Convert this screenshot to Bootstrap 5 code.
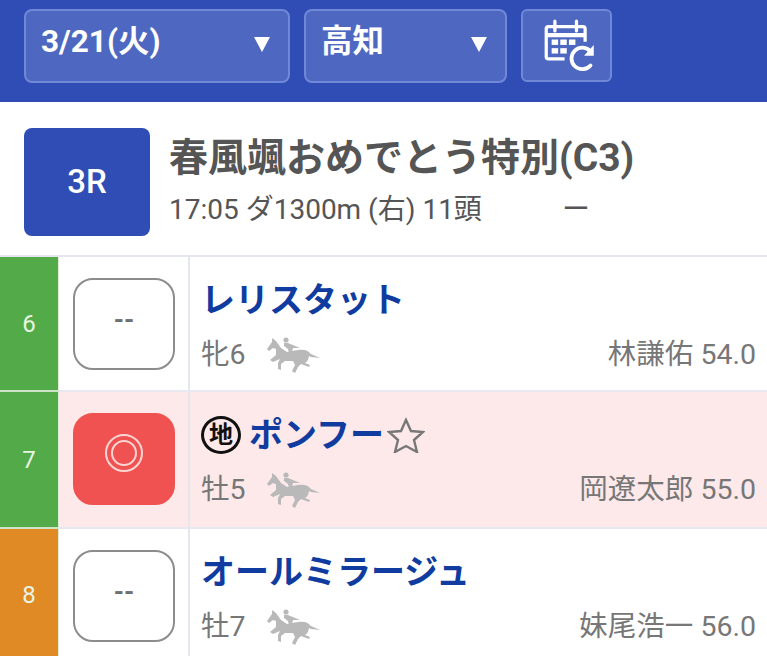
<!DOCTYPE html>
<html lang="ja">
<head>
  <meta charset="UTF-8">
  <meta name="viewport" content="width=device-width, initial-scale=1.0">
  <title>出馬表</title>
  <link href="https://cdn.jsdelivr.net/npm/bootstrap@5.3.0/dist/css/bootstrap.min.css" rel="stylesheet">
  <style>
    html, body { height: 656px; overflow: hidden; }
    body { font-family: Roboto, "Noto Sans CJK JP", sans-serif; background: #fff; color: #555; }
    .top-bar { height: 102px; background: #2f4db5; padding: 9px 24px 0; gap: 14px; }
    .pick-box { height: 74px; background: #4e68c1; border: 2px solid #6f88d8; border-radius: 8px; color: #fff; font-size: 31.5px; font-weight: 700; padding: 6px 18px 0 15px; line-height: 50px; }
    .pick-date { width: 266px; }
    .pick-place { width: 203px; }
    .pick-arrow { font-size: 0; width: 0; height: 0; border-left: 8px solid transparent; border-right: 8px solid transparent; border-top: 15px solid #fff; margin-top: 20px; }
    .cal-btn { width: 91px; height: 73px; background: #4e68c1; border: 2px solid #6f88d8; border-radius: 6px; padding-left: 6px; }
    .race-head { height: 155px; padding: 26px 24px 0; gap: 20px; border-bottom: 2px solid #e4e7ee; }
    .race-no { width: 126px; height: 108px; background: #2f4db5; color: #fff; border-radius: 8px; font-size: 33px; font-weight: 500; }
    .race-title { font-size: 39px; font-weight: 700; line-height: 46px; margin-top: 7px; margin-left: -1px; color: #555; white-space: nowrap; }
    .race-sub { font-size: 28px; line-height: 36px; margin-top: 11px; margin-left: -1px; color: #555; white-space: nowrap; }
    .race-dash { margin-left: 80px; }
    .entry-a { height: 135px; }
    .entry-b { height: 137px; }
    .entry-c { height: 140px; }
    .entry-pink { background: #fde8ea; }
    .waku { width: 59px; color: #e8f5e4; font-size: 24px; border-right: 1px solid #e0ecd9; border-bottom: 2px solid #cfe3c8; flex: none; }
    .waku-green { background: #53aa49; }
    .waku-orange { background: #e08a26; border-bottom: 0; padding-bottom: 8px; }
    .mark-col { width: 131px; flex: none; border-right: 2px solid #e4e7ee; border-bottom: 2px solid #e8e9f0; padding-top: 21px; padding-left: 14px; }
    .mark-box { width: 102px; height: 92px; border: 2px solid #8c8c8c; border-radius: 20px; font-size: 26px; font-weight: 700; color: #707070; padding-bottom: 8px; background: #fff; }
    .mark-hit { background: #f05252; border-color: #f05252; padding-bottom: 12px; }
    .info-col { min-width: 0; padding: 18px 11px 0 11px; border-bottom: 2px solid #e8e9f0; }
    .horse-name { font-size: 34px; font-weight: 700; line-height: 50px; color: #103c9f; white-space: nowrap; height: 50px; }
    .local-mark { width: 40px; height: 38px; border: 3px solid #111; border-radius: 50%; color: #111; font-size: 24px; line-height: 1; margin-right: 8px; }
    .fav-star { margin-left: 3px; }
    .info-row { font-size: 28.5px; color: #777; margin-top: 12px; line-height: 36px; }
    .sex-age { width: 66px; }
  </style>
</head>
<body>
<div class="top-bar d-flex">
  <div class="pick-box pick-date d-flex justify-content-between"><span>3/21(火)</span><span class="pick-arrow"></span></div>
  <div class="pick-box pick-place d-flex justify-content-between"><span>高知</span><span class="pick-arrow"></span></div>
  <div class="cal-btn d-flex align-items-center justify-content-center">
    <svg width="54" height="54" viewBox="0 0 50 50" fill="none" stroke="#fff">
      <path d="M20 37H5a2 2 0 0 1-2-2V9a2 2 0 0 1 2-2h32a2 2 0 0 1 2 2v12" stroke-width="3"/>
      <path d="M3 15h36" stroke-width="4"/>
      <path d="M11 2v9M31 2v9" stroke-width="3" stroke-linecap="round"/>
      <g fill="#fff" stroke="none">
        <rect x="8" y="19" width="6" height="5"/><rect x="16" y="19" width="6" height="5"/><rect x="24" y="19" width="6" height="5"/>
        <rect x="8" y="27" width="6" height="5"/><rect x="16" y="27" width="6" height="5"/>
        <path d="M47 24v10h-9z"/>
      </g>
      <path d="M44 30a10 10 0 1 0 0 13" stroke-width="3.5" stroke-linecap="round"/>
    </svg>
  </div>
</div>

<div class="race-head d-flex">
  <div class="race-no d-flex align-items-center justify-content-center flex-shrink-0">3R</div>
  <div>
    <div class="race-title">春風颯おめでとう特別(C3)</div>
    <div class="race-sub">17:05 ダ1300m (右) 11頭<span class="race-dash">ー</span></div>
  </div>
</div>

<div class="entry-a d-flex">
  <div class="waku waku-green d-flex align-items-center justify-content-center">6</div>
  <div class="mark-col"><div class="mark-box d-flex align-items-center justify-content-center">--</div></div>
  <div class="info-col flex-grow-1">
    <div class="horse-name">レリスタット</div>
    <div class="info-row d-flex align-items-center">
      <span class="sex-age">牝6</span>
      <svg width="54" height="36" viewBox="0 0 54 36"><use href="#horse"/></svg>
      <span class="ms-auto">林謙佑 54.0</span>
    </div>
  </div>
</div>

<div class="entry-b entry-pink d-flex">
  <div class="waku waku-green d-flex align-items-center justify-content-center">7</div>
  <div class="mark-col"><div class="mark-box mark-hit d-flex align-items-center justify-content-center">
    <svg width="40" height="40" viewBox="0 0 40 40" fill="none" stroke="#fbd5d2" stroke-width="2"><circle cx="20" cy="20" r="18"/><circle cx="20" cy="20" r="12"/></svg>
  </div></div>
  <div class="info-col flex-grow-1">
    <div class="horse-name d-flex align-items-center">
      <span class="local-mark d-flex align-items-center justify-content-center">地</span>
      <span>ポンフー</span>
      <svg class="fav-star" width="38" height="36" viewBox="0 0 38 36" fill="none" stroke="#777" stroke-width="2.4"><path d="M19 3l5 11 12 1-9 8 3 12-11-6-11 6 3-12-9-8 12-1z"/></svg>
    </div>
    <div class="info-row d-flex align-items-center">
      <span class="sex-age">牡5</span>
      <svg width="54" height="36" viewBox="0 0 54 36"><use href="#horse"/></svg>
      <span class="ms-auto">岡遼太郎 55.0</span>
    </div>
  </div>
</div>

<div class="entry-c d-flex">
  <div class="waku waku-orange d-flex align-items-center justify-content-center">8</div>
  <div class="mark-col"><div class="mark-box d-flex align-items-center justify-content-center">--</div></div>
  <div class="info-col flex-grow-1">
    <div class="horse-name">オールミラージュ</div>
    <div class="info-row d-flex align-items-center">
      <span class="sex-age">牡7</span>
      <svg width="54" height="36" viewBox="0 0 54 36"><use href="#horse"/></svg>
      <span class="ms-auto">妹尾浩一 56.0</span>
    </div>
  </div>
</div>

<svg width="0" height="0" class="d-block">
  <symbol id="horse" viewBox="0 0 54 36">
    <g fill="#b9b9b9">
      <path d="M0 12L5 5L5 1L9 4L14 11L20 15L31 13C37 12 41 13 44 17L53 21L44 20L42 19C41 23 41 24 38 26L43 28L42 30L34 27L31 30L28 36L25 34L28 28L26 24L18 24L14 27L14 33L11 32L11 26L13 22L6 25L3 23L9 18L9 12L6 11L2 14Z"/>
      <circle cx="19" cy="3" r="2.6"/>
      <path d="M17 6L21 6L33 11L26 11L25 15L22 16L21 12L17 9Z"/>
    </g>
  </symbol>
</svg>
</body>
</html>
